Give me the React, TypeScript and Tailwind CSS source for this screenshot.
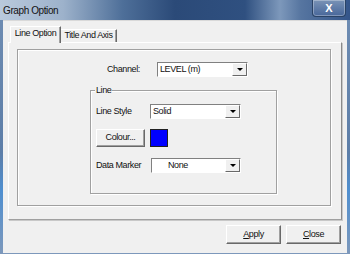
import { useState } from 'react'

const font = { fontFamily: '"Liberation Sans", Arial, sans-serif' }

function Dropdown({ value, width, indent = 'pl-[2px]' }: { value: string; width: string; indent?: string }) {
  return (
    <div
      className={`${width} h-[15px] flex bg-white border-t border-l border-t-[#808080] border-l-[#808080] border-b border-r border-b-white border-r-white`}
    >
      <div className={`flex-1 flex items-center ${indent} text-[#111]`}>{value}</div>
      <div className="w-[15px] h-full flex items-center justify-center bg-[#f0f0f0] border-t border-l border-t-white border-l-white border-b border-r border-b-[#696969] border-r-[#696969]">
        <div className="w-0 h-0 border-l-[3px] border-r-[3px] border-t-[3px] border-l-transparent border-r-transparent border-t-black" />
      </div>
    </div>
  )
}

function Button({ children, className }: { children: React.ReactNode; className: string }) {
  return (
    <button
      className={`${className} flex items-center justify-center bg-[#f0f0f0] text-[#111] border-t border-l border-t-white border-l-white border-b border-r border-b-[#696969] border-r-[#696969] shadow-[inset_-1px_-1px_0_#a0a0a0]`}
    >
      {children}
    </button>
  )
}

export default function App() {
  const [tab, setTab] = useState('line')

  return (
    <div
      className="w-[350px] h-[254px] flex flex-col overflow-hidden bg-[linear-gradient(180deg,#6f8db3_0%,#5d7ea8_60%,#4f8fd0_75%,#7d98bb_100%)] text-[9px] tracking-[-0.4px] text-[#111]"
      style={font}
    >
      {/* title bar */}
      <div className="h-[20px] flex items-start justify-between bg-[linear-gradient(90deg,#b9c9dc_0%,#9db2cb_18%,#4e6f99_35%,#2b4a78_50%,#2f5080_70%,#7d98bb_80%,#5675a0_86%,#34558a_100%)]">
        <div className="pl-[3px] pt-[3px] text-[10px] text-[#111]">Graph Option</div>
        <div className="mr-[4px] w-[34px] h-[17px] flex items-center justify-center rounded-b-[4px] border border-t-0 border-[#2a4366] bg-gradient-to-b from-[#7a93b6] to-[#48679a] shadow-[inset_0_0_0_1px_rgba(255,255,255,0.3)]">
          <span className="text-white font-bold text-[11px] leading-none tracking-normal">X</span>
        </div>
      </div>

      {/* client area */}
      <div className="flex-1 mx-[3px] mb-[1px] bg-[#f0f0f0] flex flex-col border-t border-[#d9d9d9]">
        {/* tabs */}
        <div className="flex items-end pl-[7px] pt-[4px] h-[21px]">
          <button
            onClick={() => setTab('line')}
            className="relative z-10 w-[51px] h-[17px] -mb-[1px] pb-[2px] flex items-center justify-center bg-[#f0f0f0] text-[#111] border-t border-l border-t-white border-l-white border-r border-r-[#696969] shadow-[inset_-1px_0_0_#a0a0a0]"
          >
            Line Option
          </button>
          <button
            onClick={() => setTab('title')}
            className="w-[56px] h-[13px] flex items-center justify-center bg-[#f0f0f0] text-[#111] border-t border-t-white border-r border-r-[#696969] shadow-[inset_-1px_0_0_#a0a0a0]"
          >
            Title And Axis
          </button>
        </div>

        {/* tab panel */}
        <div className="mx-[5px] h-[178px] border-t border-l border-t-white border-l-white border-b border-r border-b-[#a0a0a0] border-r-[#8a8a8a] shadow-[1px_1px_0_#c8c8c8] pt-[6px] pl-[8px] pr-[10px]">
          {tab === 'line' && (
            <div className="h-[157px] border border-[#a0a0a0] shadow-[1px_1px_0_#fff,inset_1px_1px_0_#fff]">
              <div className="flex items-center pl-[89px] pt-[12px]">
                <div className="w-[50px]">Channel:</div>
                <Dropdown value="LEVEL (m)" width="w-[91px]" />
              </div>

              <div className="ml-[72px] mt-[13px] w-[187px] h-[104px] border border-[#a0a0a0] shadow-[1px_1px_0_#fff,inset_1px_1px_0_#fff]">
                <span className="block w-fit -mt-[7px] ml-[4px] px-[1px] bg-[#f0f0f0] leading-[12px]">Line</span>

                <div className="flex items-center pl-[5px] mt-[8px]">
                  <div className="w-[54px]">Line Style</div>
                  <Dropdown value="Solid" width="w-[91px]" />
                </div>

                <div className="flex items-center pl-[5px] mt-[10px]">
                  <Button className="w-[49px] h-[18px]">Colour...</Button>
                  <div className="ml-[5px] w-[18px] h-[18px] bg-[#0000ff] border border-[#202020]" />
                </div>

                <div className="flex items-center pl-[5px] mt-[11px]">
                  <div className="w-[55px]">Data Marker</div>
                  <Dropdown value="None" width="w-[90px]" indent="pl-[16px]" />
                </div>
              </div>
            </div>
          )}
        </div>

        {/* buttons */}
        <div className="flex justify-end gap-[5px] pr-[6px] mt-[5px]">
          <Button className="w-[55px] h-[19px]">
            <span>
              <span className="underline">A</span>pply
            </span>
          </Button>
          <Button className="w-[55px] h-[19px]">
            <span>
              <span className="underline">C</span>lose
            </span>
          </Button>
        </div>
      </div>
    </div>
  )
}
